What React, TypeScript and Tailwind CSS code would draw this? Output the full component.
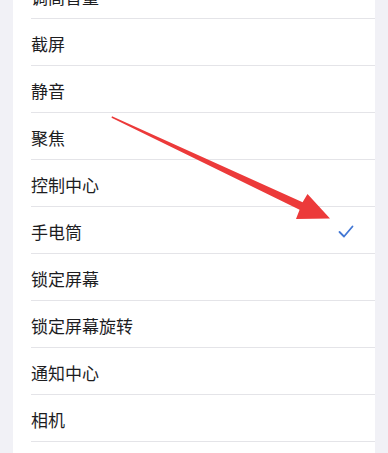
const items = [
  "调高音量",
  "截屏",
  "静音",
  "聚焦",
  "控制中心",
  "手电筒",
  "锁定屏幕",
  "锁定屏幕旋转",
  "通知中心",
  "相机",
];

export default function App() {
  return (
    <main
      className="relative h-[453px] w-[388px] overflow-hidden bg-[#f1f1f6] px-[13px]"
      style={{ fontFamily: '"Noto Sans CJK SC", "Noto Sans", sans-serif' }}
    >
      <div className="mt-[-28px] bg-white">
        {items.map((label) => (
          <div key={label} className="flex h-[47px] items-center pl-[18px]">
            <div className="flex h-full flex-1 items-center border-b border-[#e4e4e8] pr-[20px]">
              <span className="flex-1 pt-[2px] text-[17px] leading-none text-[#1d1d1f]">{label}</span>
              {label === "手电筒" && (
                <svg width="18" height="15" viewBox="0 0 18 15" className="mt-[2px]">
                  <path
                    d="M2.5 8 L7 12.5 L15.5 2.5"
                    fill="none"
                    stroke="#4277d4"
                    strokeWidth="1.8"
                    strokeLinecap="round"
                    strokeLinejoin="round"
                  />
                </svg>
              )}
            </div>
          </div>
        ))}
        <div className="h-[40px]" />
      </div>

      <svg
        className="pointer-events-none absolute left-0 top-0"
        width="388"
        height="453"
        viewBox="0 0 388 453"
      >
        <polygon
          points="112,116.2 302.6,202.2 307.5,194 330,218.5 296,219 299.6,209.8 111.5,117.7"
          fill="#ec3a3a"
        />
      </svg>
    </main>
  );
}
